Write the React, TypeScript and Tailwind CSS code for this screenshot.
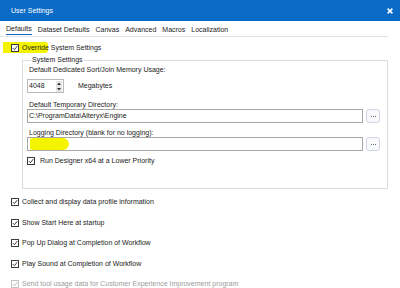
import React from "react";

function Check({ disabled = false }: { disabled?: boolean }) {
  return (
    <span
      className={`flex w-[8px] h-[8px] shrink-0 items-center justify-center border bg-white ${
        disabled ? "border-[#c4c4c4]" : "border-[#3a3a3a]"
      }`}
    >
      <svg width="6" height="6" viewBox="0 0 6 6">
        <path
          d="M0.8 3.1 L2.4 4.7 L5.3 1.1"
          fill="none"
          stroke={disabled ? "#b0b0b0" : "#262626"}
          strokeWidth="0.9"
        />
      </svg>
    </span>
  );
}

function DotsButton() {
  return (
    <div className="flex h-[14px] w-[14px] items-center justify-center rounded-[3px] border border-[#cdd4e4] bg-[#f9f9fc]">
      <span className="h-[1px] w-[5px] border-t border-dotted border-[#6b7280]" />
    </div>
  );
}

export default function App() {
  const tabs = ["Defaults", "Dataset Defaults", "Canvas", "Advanced", "Macros", "Localization"];
  const bottom = [
    "Collect and display data profile information",
    "Show Start Here at startup",
    "Pop Up Dialog at Completion of Workflow",
    "Play Sound at Completion of Workflow",
  ];
  return (
    <div
      className="relative h-[288px] w-[400px] overflow-hidden bg-white text-[7px] leading-[8px] text-[#1b1b1b]"
      style={{ fontFamily: '"Liberation Sans", Arial, sans-serif' }}
    >
      {/* Title bar */}
      <div className="flex h-[21px] items-center justify-between bg-[#0b6cc8] pl-[11px] pr-[7px] text-white">
        <span>User Settings</span>
        <svg width="6" height="6" viewBox="0 0 6 6">
          <path d="M0.6 0.6 L5.4 5.4 M5.4 0.6 L0.6 5.4" stroke="#ffffff" strokeWidth="1.5" />
        </svg>
      </div>

      {/* Tabs */}
      <div className="mr-[12px] flex h-[16px] items-center gap-[6px] border-b border-[#dfe4ea] pl-[6px] pt-[2px]">
        {tabs.map((t, i) => (
          <span
            key={t}
            className={i === 0 ? "border-b border-[#1a62c4] pb-[1px] pt-[1px]" : "pb-[1px] pt-[1px]"}
          >
            {t}
          </span>
        ))}
      </div>

      <div className="pl-[11px]">
        {/* Override row */}
        <div className="relative mt-[3px] flex h-[16px] items-center gap-[3px]">
          <div className="absolute left-[-8px] top-[2px] h-[11px] w-[45px] rounded-r-[3px] bg-[#f4f400]" />
          <span className="relative">
            <Check />
          </span>
          <span className="relative">Override System Settings</span>
        </div>

        {/* Group box */}
        <fieldset className="ml-[11px] w-[366px] border border-[#dcdcdc] pb-[23px] pl-[4px]">
          <legend className="ml-[4px] px-[1px] leading-[8px]">System Settings</legend>
          <div className="mt-[2px] pl-[2px]">Default Dedicated Sort/Join Memory Usage:</div>
          <div className="mt-[5px] flex items-center">
            <div className="flex h-[14px] w-[37px] items-center justify-between border border-[#b9b9b9] pl-[1px] pr-[1px]">
              <span>4048</span>
              <div className="flex h-[11px] w-[6px] flex-col items-center justify-between bg-[#e6e6e6]">
                <svg width="6" height="5" viewBox="0 0 6 5">
                  <path d="M1 4 L3 1.5 L5 4 Z" fill="#333" />
                </svg>
                <svg width="6" height="5" viewBox="0 0 6 5">
                  <path d="M1 1 L3 3.5 L5 1 Z" fill="#333" />
                </svg>
              </div>
            </div>
            <span className="ml-[14px]">Megabytes</span>
          </div>
          <div className="mt-[8px] pl-[2px]">Default Temporary Directory:</div>
          <div className="flex items-center gap-[3px]">
            <div className="flex h-[14px] w-[336px] items-center border border-[#a8a8a8] pl-[1px]">
              C:\ProgramData\Alteryx\Engine
            </div>
            <DotsButton />
          </div>
          <div className="mt-[6px] pl-[2px]">Logging Directory (blank for no logging):</div>
          <div className="flex items-center gap-[3px]">
            <div className="relative h-[14px] w-[336px] border border-[#a8a8a8]">
              <div className="absolute left-[2px] top-[0px] h-[12px] w-[39px] rounded-r-[6px] rounded-l-[2px] bg-[#f4f400]" />
            </div>
            <DotsButton />
          </div>
          <div className="mt-[6px] flex h-[8px] items-center gap-[5px]">
            <Check />
            <span>Run Designer x64 at a Lower Priority</span>
          </div>
        </fieldset>

        {/* Bottom options */}
        <div className="mt-[8px] flex flex-col gap-[10.5px]">
          {bottom.map((b) => (
            <div key={b} className="flex h-[10px] items-center gap-[3px]">
              <Check />
              <span>{b}</span>
            </div>
          ))}
          <div className="flex h-[10px] items-center gap-[3px] text-[#9c9c9c]">
            <Check disabled />
            <span>Send tool usage data for Customer Experience Improvement program</span>
          </div>
        </div>
      </div>
    </div>
  );
}
